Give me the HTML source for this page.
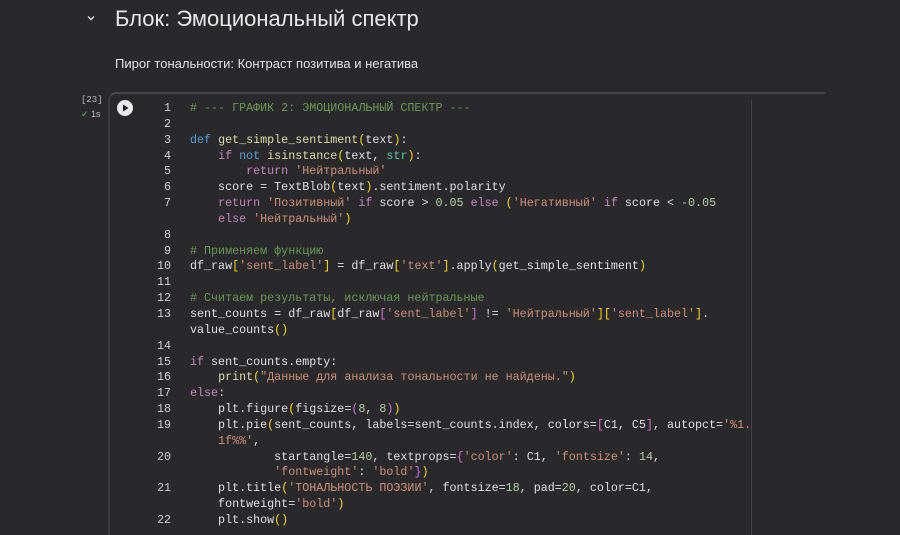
<!DOCTYPE html>
<html><head><meta charset="utf-8"><style>
html,body{margin:0;width:900px;height:535px;overflow:hidden}
body{background:#29292b;position:relative;font-family:"Liberation Sans","DejaVu Sans",sans-serif;color:#e3e3e3}
.h{position:absolute;left:115px;top:6px;font-size:22px;color:#e8e8e8}
.chev{position:absolute;left:86px;top:13px}
.p{position:absolute;left:115px;top:56px;font-size:13px;color:#e3e3e3}
.cnt{position:absolute;left:81px;top:95px;font-size:9px;color:#bbb;font-family:"Liberation Mono",monospace}
.ok{position:absolute;left:81px;top:109px;font-size:9px;color:#bbb}
.cell{position:absolute;left:108px;top:92px;width:715px;height:460px;border-top:2px solid #4a4a4c;border-left:2px solid #3c3c3e;border-top-left-radius:8px}
.ruler{position:absolute;left:751px;top:100px;width:1px;height:440px;background:#444}
.run{position:absolute;left:117px;top:100px;width:16px;height:16px;border-radius:50%;background:#e8e8e8}
.code{position:absolute;left:0;top:101px;width:900px;font-family:"Liberation Mono","DejaVu Sans Mono",monospace;font-size:11.7px;line-height:15.85px;color:#e0e0e0}
.r{height:15.85px;position:relative}
.n{position:absolute;left:131px;width:40px;text-align:right;color:#d0d0d0}
.t{position:absolute;left:190px;white-space:pre}
.c{color:#6a9955}.k{color:#569cd6}.kw{color:#c586c0}.s{color:#ce9178}.f{color:#dcdcaa}.b{color:#ffd700}.b2{color:#da70d6}.num{color:#b5cea8}.cl{color:#4ec9b0}
</style></head><body>
<svg class="chev" width="10" height="10" viewBox="0 0 10 10"><path d="M2 3.5 L5 6.5 L8 3.5" stroke="#ddd" stroke-width="1.4" fill="none"/></svg>
<div class="h">Блок: Эмоциональный спектр</div>
<div class="p">Пирог тональности: Контраст позитива и негатива</div>
<div class="cnt">[23]</div>
<div class="ok"><span style="color:#5bb974">✓</span> 1s</div>
<div class="cell"></div>
<div class="ruler"></div>
<div class="run"><svg width="16" height="16" viewBox="0 0 16 16"><path d="M6 4.5 L11.5 8 L6 11.5 Z" fill="#222"/></svg></div>
<div class="code"><div class="r"><span class="n">1</span><span class="t"><span class="c"># --- ГРАФИК 2: ЭМОЦИОНАЛЬНЫЙ СПЕКТР ---</span></span></div><div class="r"><span class="n">2</span></div><div class="r"><span class="n">3</span><span class="t"><span class="k">def</span> <span class="f">get_simple_sentiment</span><span class="b">(</span>text<span class="b">)</span>:</span></div><div class="r"><span class="n">4</span><span class="t">    <span class="kw">if</span> <span class="k">not</span> <span class="f">isinstance</span><span class="b">(</span>text, <span class="cl">str</span><span class="b">)</span>:</span></div><div class="r"><span class="n">5</span><span class="t">        <span class="kw">return</span> <span class="s">'Нейтральный'</span></span></div><div class="r"><span class="n">6</span><span class="t">    score = TextBlob<span class="b">(</span>text<span class="b">)</span>.sentiment.polarity</span></div><div class="r"><span class="n">7</span><span class="t">    <span class="kw">return</span> <span class="s">'Позитивный'</span> <span class="kw">if</span> score &gt; <span class="num">0.05</span> <span class="kw">else</span> <span class="b">(</span><span class="s">'Негативный'</span> <span class="kw">if</span> score &lt; <span class="num">-0.05</span></span></div><div class="r"><span class="t">    <span class="kw">else</span> <span class="s">'Нейтральный'</span><span class="b">)</span></span></div><div class="r"><span class="n">8</span></div><div class="r"><span class="n">9</span><span class="t"><span class="c"># Применяем функцию</span></span></div><div class="r"><span class="n">10</span><span class="t">df_raw<span class="b">[</span><span class="s">'sent_label'</span><span class="b">]</span> = df_raw<span class="b">[</span><span class="s">'text'</span><span class="b">]</span>.apply<span class="b">(</span>get_simple_sentiment<span class="b">)</span></span></div><div class="r"><span class="n">11</span></div><div class="r"><span class="n">12</span><span class="t"><span class="c"># Считаем результаты, исключая нейтральные</span></span></div><div class="r"><span class="n">13</span><span class="t">sent_counts = df_raw<span class="b">[</span>df_raw<span class="b2">[</span><span class="s">'sent_label'</span><span class="b2">]</span> != <span class="s">'Нейтральный'</span><span class="b">][</span><span class="s">'sent_label'</span><span class="b">]</span>.</span></div><div class="r"><span class="t">value_counts<span class="b">()</span></span></div><div class="r"><span class="n">14</span></div><div class="r"><span class="n">15</span><span class="t"><span class="kw">if</span> sent_counts.empty:</span></div><div class="r"><span class="n">16</span><span class="t">    <span class="f">print</span><span class="b">(</span><span class="s">"Данные для анализа тональности не найдены."</span><span class="b">)</span></span></div><div class="r"><span class="n">17</span><span class="t"><span class="kw">else</span>:</span></div><div class="r"><span class="n">18</span><span class="t">    plt.figure<span class="b">(</span>figsize=<span class="b2">(</span><span class="num">8</span>, <span class="num">8</span><span class="b2">)</span><span class="b">)</span></span></div><div class="r"><span class="n">19</span><span class="t">    plt.pie<span class="b">(</span>sent_counts, labels=sent_counts.index, colors=<span class="b2">[</span>C1, C5<span class="b2">]</span>, autopct=<span class="s">'%1.</span></span></div><div class="r"><span class="t">    <span class="s">1f%%'</span>,</span></div><div class="r"><span class="n">20</span><span class="t">            startangle=<span class="num">140</span>, textprops=<span class="b2">{</span><span class="s">'color'</span>: C1, <span class="s">'fontsize'</span>: <span class="num">14</span>,</span></div><div class="r"><span class="t">            <span class="s">'fontweight'</span>: <span class="s">'bold'</span><span class="b2">}</span><span class="b">)</span></span></div><div class="r"><span class="n">21</span><span class="t">    plt.title<span class="b">(</span><span class="s">'ТОНАЛЬНОСТЬ ПОЭЗИИ'</span>, fontsize=<span class="num">18</span>, pad=<span class="num">20</span>, color=C1,</span></div><div class="r"><span class="t">    fontweight=<span class="s">'bold'</span><span class="b">)</span></span></div><div class="r"><span class="n">22</span><span class="t">    plt.show<span class="b">()</span></span></div></div>
</body></html>
